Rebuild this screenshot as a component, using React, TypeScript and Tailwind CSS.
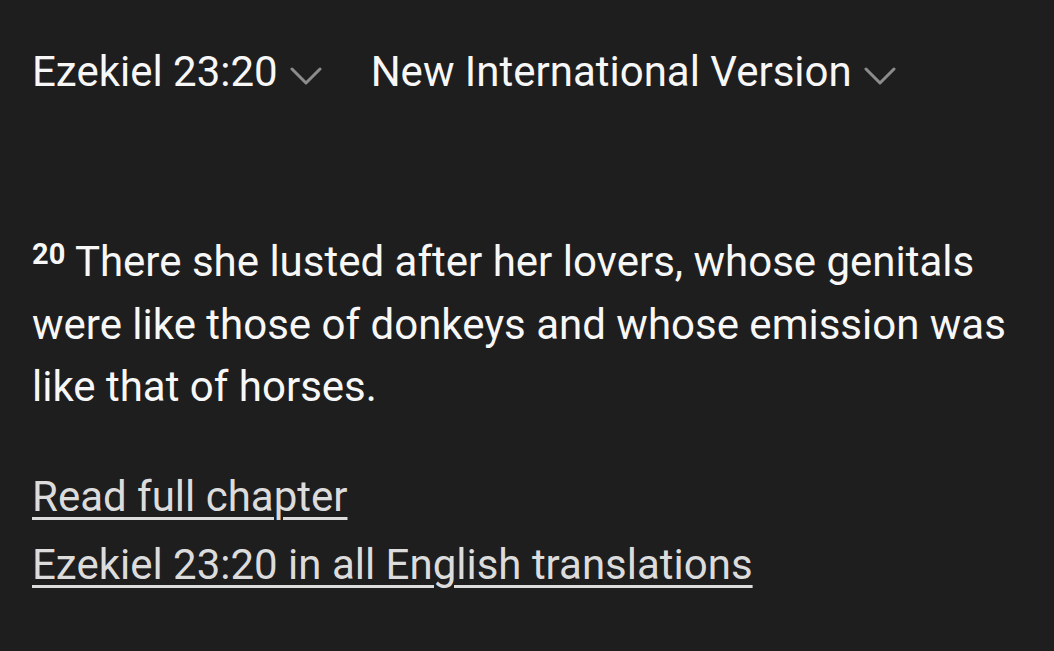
import React from 'react';

const Chevron = () => (
    <svg width="32" height="20" viewBox="0 0 32 20" className="shrink-0 mt-[8px]" fill="none">
        <polyline points="2,3 16,17 30,3" stroke="#8c8c8c" strokeWidth="3" strokeLinecap="round" strokeLinejoin="round" />
    </svg>
);

export default function App() {
    return (
        <div
            className="w-[1054px] h-[651px] bg-[#1f1e1f] text-[#f7f7f7] px-[32px] overflow-hidden"
            style={{ fontFamily: 'Roboto, "Noto Sans", sans-serif' }}
        >
            {/* Header selectors */}
            <div className="flex items-center pt-[47px] text-[42px] leading-[50px]">
                <div className="flex items-center gap-[12px]">
                    <span>Ezekiel 23:20</span>
                    <Chevron />
                </div>
                <div className="flex items-center gap-[12px] ml-[49px]">
                    <span>New International Version</span>
                    <Chevron />
                </div>
            </div>

            {/* Verse */}
            <p className="mt-[134px] text-[42px] leading-[62.5px]">
                <span className="text-[29px] leading-none font-bold align-[12px]">20</span> There she lusted after her lovers, whose genitals were like those of donkeys and whose emission was like that of horses.
            </p>

            {/* Links */}
            <div className="mt-[44px] flex flex-col items-start text-[42px] leading-[68px] text-[#dcdcdc]">
                <a href="#" className="underline decoration-[3px] underline-offset-[6px]">Read full chapter</a>
                <a href="#" className="underline decoration-[3px] underline-offset-[6px]">Ezekiel 23:20 in all English translations</a>
            </div>
        </div>
    );
}
